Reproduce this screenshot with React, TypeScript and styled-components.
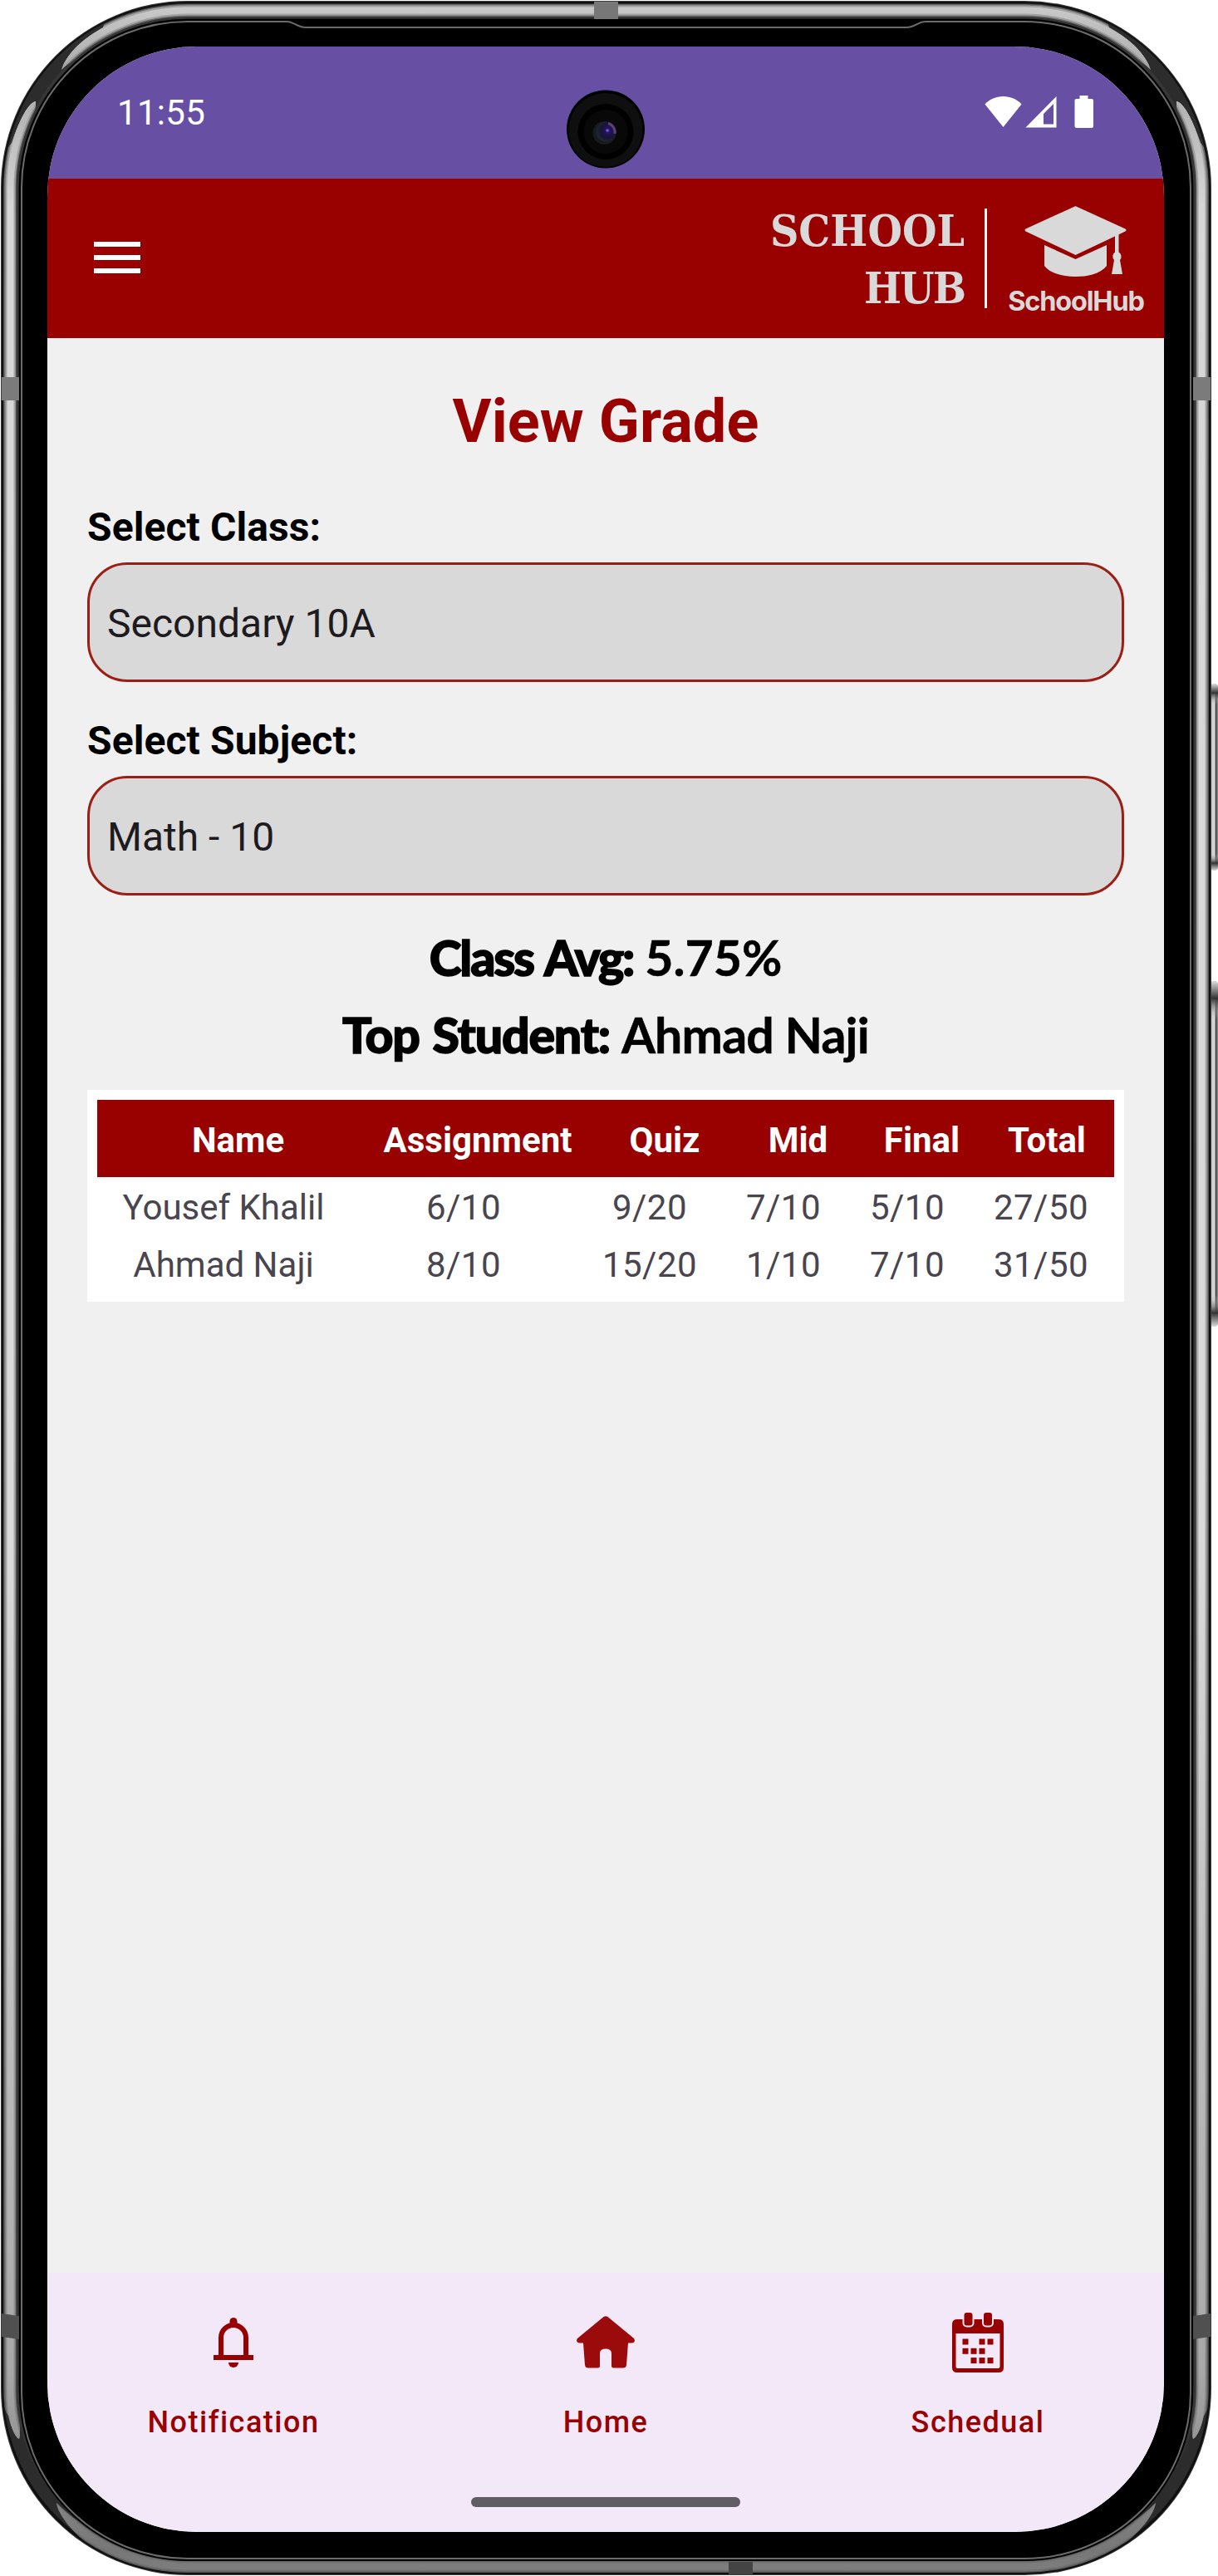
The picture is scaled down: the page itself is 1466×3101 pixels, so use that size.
import React from "react";
import styled, { createGlobalStyle } from "styled-components";

const RED = "#990000";

const GlobalStyle = createGlobalStyle`
  * { box-sizing: border-box; }
  body { margin: 0; background: #fff; }
`;

const Device = styled.div`
  position: relative;
  width: 1466px;
  height: 3101px;
  padding: 56px 65px 53px 57px;
  overflow: hidden;
  font-family: Roboto, "Liberation Sans", sans-serif;
`;

const FrameArt = styled.svg`
  position: absolute;
  inset: 0;
`;

const Screen = styled.main`
  position: relative;
  display: flex;
  flex-direction: column;
  width: 1344px;
  height: 2992px;
  border-radius: 180px;
  overflow: hidden;
  background: #f0f0f0;
`;

const StatusBar = styled.div`
  display: flex;
  justify-content: space-between;
  height: 159px;
  padding: 55px 84px 0 84px;
  background: #6750a4;
  color: #fff;
`;

const Clock = styled.span`
  font-size: 42px;
  line-height: 50px;
  letter-spacing: 0.3px;
`;

const StatusIcons = styled.svg`
  margin-top: 3px;
`;

const Camera = styled.svg`
  position: absolute;
  left: 624px;
  top: 52px;
`;

const AppBar = styled.header`
  display: flex;
  align-items: center;
  height: 192px;
  padding: 0 24px 0 56px;
  background: ${RED};
`;

const MenuButton = styled.button`
  display: flex;
  flex-direction: column;
  gap: 10px;
  width: 56px;
  padding: 0 0 2px;
  border: 0;
  background: none;
`;

const MenuLine = styled.span`
  height: 6px;
  background: #fff;
`;

const BrandName = styled.div`
  display: flex;
  flex-direction: column;
  align-items: flex-end;
  margin-left: auto;
  padding-top: 2px;
  font-family: "DejaVu Serif Condensed", "DejaVu Serif", serif;
  font-stretch: condensed;
  font-weight: 700;
  font-size: 53px;
  line-height: 69px;
  color: #d9d9d9;
`;

const BrandWord = styled.span<{ $tracking: number }>`
  letter-spacing: ${(p) => p.$tracking}px;
`;

const BrandDivider = styled.div`
  width: 3px;
  height: 120px;
  margin: 0 25px 0 24px;
  background: #fff;
`;

const Logo = styled.div`
  display: flex;
  flex-direction: column;
  align-items: center;
  width: 164px;
  padding-top: 7px;
  color: #d9d9d9;
`;

const LogoText = styled.span`
  margin-top: 8px;
  font-family: Inter, "Liberation Sans", sans-serif;
  font-weight: 700;
  font-size: 32.5px;
  letter-spacing: -1.2px;
  line-height: 40px;
  white-space: nowrap;
`;

const Content = styled.section`
  display: flex;
  flex-direction: column;
  flex: 1;
  padding: 59px 48px 0;
`;

const Title = styled.h1`
  margin: 0;
  text-align: center;
  font-weight: 700;
  font-size: 72px;
  line-height: 84px;
  letter-spacing: 0.1px;
  color: ${RED};
`;

const Field = styled.div<{ $gap: number }>`
  display: flex;
  flex-direction: column;
  margin-top: ${(p) => p.$gap}px;
`;

const FieldLabel = styled.label`
  font-weight: 700;
  font-size: 48px;
  line-height: 56px;
  letter-spacing: 0.1px;
  color: #000;
`;

const SelectBox = styled.div`
  display: flex;
  align-items: center;
  height: 144px;
  margin-top: 14px;
  padding: 2px 21px 0;
  border: 3px solid #9c1f15;
  border-radius: 48px;
  background: #d9d9d9;
  font-size: 48px;
  color: #1d1b20;
`;

const Stats = styled.div`
  display: flex;
  flex-direction: column;
  margin-top: 28px;
`;

const StatLine = styled.p`
  display: flex;
  justify-content: center;
  gap: 14px;
  margin: 0;
  font-family: Lato, "Open Sans", sans-serif;
  font-size: 59px;
  line-height: 93px;
  white-space: nowrap;
  color: #000;
`;

const StatKey = styled.strong<{ $tracking: number }>`
  font-weight: 900;
  letter-spacing: ${(p) => p.$tracking}px;
  word-spacing: 3px;
  -webkit-text-stroke: 1.5px #000;
`;

const StatValue = styled.span<{ $tracking: number }>`
  font-weight: 700;
  letter-spacing: ${(p) => p.$tracking}px;
  -webkit-text-stroke: 0.5px #000;
`;

const TableCard = styled.div`
  height: 255px;
  margin-top: 20px;
  padding: 12px;
  background: #fff;
`;

const HeadRow = styled.div`
  display: grid;
  grid-template-columns: 339px 238px 212px 109px 189px 112px;
  align-items: center;
  height: 93px;
  padding-top: 3px;
  background: ${RED};
  color: #fff;
  font-weight: 700;
  font-size: 42px;
  text-align: center;
`;

const BodyRows = styled.div`
  padding-top: 2px;
`;

const BodyRow = styled.div`
  display: grid;
  grid-template-columns: 304px 274px 174px 148px 150px 172px;
  align-items: center;
  height: 69px;
  color: #49454f;
  font-size: 42px;
  text-align: center;
`;

const NameCell = styled.span`
  letter-spacing: 0;
`;

const ScoreCell = styled.span`
  letter-spacing: 0.5px;
`;

const BottomNav = styled.nav`
  position: relative;
  display: grid;
  grid-template-columns: repeat(3, 1fr);
  height: 312px;
  background: #f2e8f8;
`;

const NavItem = styled.a`
  display: flex;
  flex-direction: column;
  align-items: center;
  padding-top: 44px;
  color: ${RED};
`;

const NavLabel = styled.span`
  margin-top: 37px;
  font-weight: 500;
  font-size: 36px;
  line-height: 42px;
  letter-spacing: 1.5px;
`;

const GesturePill = styled.div`
  position: absolute;
  left: 510px;
  bottom: 30px;
  width: 324px;
  height: 12px;
  border-radius: 6px;
  background: #605d64;
`;

/* Metal rails, antenna breaks, side keys and the black glass border. */
function PhoneFrame() {
  return (
    <FrameArt width="1466" height="3101" viewBox="0 0 1466 3101" fill="none">
      <defs>
        <linearGradient id="shineLow" gradientUnits="userSpaceOnUse" x1="0" y1="0" x2="0" y2="3101">
          <stop offset="0" stopColor="#6c6c6c" />
          <stop offset="0.6" stopColor="#7a7a7a" />
          <stop offset="1" stopColor="#585858" />
        </linearGradient>
        <linearGradient id="shineMid" gradientUnits="userSpaceOnUse" x1="0" y1="0" x2="0" y2="3101">
          <stop offset="0" stopColor="#a2a2a2" />
          <stop offset="0.5" stopColor="#b0b0b0" />
          <stop offset="0.9" stopColor="#919191" />
          <stop offset="1" stopColor="#707070" />
        </linearGradient>
        <linearGradient id="shineHigh" gradientUnits="userSpaceOnUse" x1="0" y1="0" x2="0" y2="3101">
          <stop offset="0" stopColor="#cccccc" />
          <stop offset="0.03" stopColor="#a9a9a9" />
          <stop offset="0.08" stopColor="#d6d6d6" />
          <stop offset="0.6" stopColor="#dadada" />
          <stop offset="0.92" stopColor="#a8a8a8" />
          <stop offset="0.99" stopColor="#777777" />
          <stop offset="1" stopColor="#808080" />
        </linearGradient>
        <linearGradient id="key" x1="0" y1="0" x2="1" y2="0">
          <stop offset="0" stopColor="#c2c2c2" />
          <stop offset="0.6" stopColor="#d8d8d8" />
          <stop offset="0.75" stopColor="#444" />
          <stop offset="1" stopColor="#999" />
        </linearGradient>
        <linearGradient id="keyEnds" x1="0" y1="0" x2="0" y2="1">
          <stop offset="0" stopColor="#ddd" />
          <stop offset="0.05" stopColor="#333" />
          <stop offset="0.11" stopColor="#ccc" stopOpacity="0" />
          <stop offset="0.91" stopColor="#ccc" stopOpacity="0" />
          <stop offset="0.96" stopColor="#333" />
          <stop offset="1" stopColor="#ddd" />
        </linearGradient>
        <clipPath id="shine">
          <path d="M74 84C80 66 96 49 124 33L135 0H1324L1335 33C1363 49 1379 66 1385 84C1376 75 1357 64 1333 58L1320 70H139L126 58C102 64 83 75 74 84Z" />
          <path d="M43 122C34 124 24 143 14 172L0 190V2890L10 2908C14 2925 19 2934 23 2936C25 2928 24 2915 22 2890L30 2800V220L32 176C36 160 44 136 43 122Z" />
          <path d="M1416 122C1425 124 1435 143 1445 172L1459 190V2890L1449 2908C1445 2925 1440 2934 1436 2936C1434 2928 1435 2915 1437 2890L1429 2800V220L1427 176C1423 160 1415 136 1416 122Z" />
          <path d="M68 3013C70 3026 84 3046 114 3070L135 3101H1324L1345 3070C1375 3046 1389 3026 1391 3013C1380 3024 1362 3040 1333 3050L1320 3040H139L126 3050C97 3040 79 3024 68 3013Z" />
        </clipPath>
      </defs>
      <rect x="1456" y="823" width="10" height="225" rx="5" fill="url(#key)" />
      <rect x="1456" y="823" width="10" height="225" rx="5" fill="url(#keyEnds)" />
      <rect x="1456" y="1181" width="10" height="416" rx="5" fill="url(#key)" />
      <rect x="1456" y="1181" width="10" height="416" rx="5" fill="url(#keyEnds)" />
      <rect x="1" y="1" width="1457" height="3099" rx="225" fill="#3c3c3c" />
      <rect x="2" y="2" width="1455" height="3097" rx="224" fill="#101010" />
      <rect x="12" y="12" width="1435" height="3075" rx="214" stroke="#2c2c2c" strokeWidth="16" />
      <rect x="20.5" y="20.5" width="1418" height="3058" rx="206" stroke="#363636" strokeWidth="4" />
      <g clipPath="url(#shine)">
        <rect x="12" y="12.5" width="1435" height="3077" rx="214" stroke="url(#shineLow)" strokeWidth="15" />
        <rect x="12.5" y="12.5" width="1434" height="3077" rx="213" stroke="url(#shineMid)" strokeWidth="12" />
        <rect x="12.5" y="12.5" width="1434" height="3077" rx="213" stroke="url(#shineHigh)" strokeWidth="8" />
      </g>
      <rect x="715" y="2" width="29" height="21" fill="#777" />
      <rect x="877" y="3084" width="29" height="15" fill="#444" />
      <rect x="2" y="454" width="21" height="28" fill="#7b7b7b" />
      <rect x="1436" y="454" width="21" height="28" fill="#7b7b7b" />
      <path d="M2 2785L23 2788V2816L2 2813Z" fill="#505050" />
      <path d="M1457 2785L1436 2788V2816L1457 2813Z" fill="#505050" />
      <rect x="23" y="23" width="1413" height="3060" rx="203" fill="#000" />
      <path
        d="M226 26H345C354 26 357 33 368 33H1091C1102 33 1105 26 1114 26H1233A200 200 0 0 1 1433 226V2880A200 200 0 0 1 1233 3080H226A200 200 0 0 1 26 2880V226A200 200 0 0 1 226 26Z"
        stroke="#6b6b6b"
        strokeWidth="2"
      />
    </FrameArt>
  );
}

function CameraLens() {
  return (
    <Camera width="96" height="96" viewBox="681 108 96 96">
      <defs>
        <radialGradient id="lens" cx="0.6" cy="0.45" r="0.6">
          <stop offset="0" stopColor="#4a2cc0" />
          <stop offset="0.15" stopColor="#22165f" />
          <stop offset="0.6" stopColor="#181433" />
          <stop offset="1" stopColor="#1d2836" />
        </radialGradient>
      </defs>
      <circle cx="729" cy="155.500" r="47" fill="#000" />
      <circle cx="729" cy="156.500" r="44.500" fill="#0f0f0f" />
      <circle cx="729" cy="158.500" r="33.500" fill="#000" />
      <circle cx="729" cy="158.500" r="26.500" fill="#080808" />
      <circle cx="727.500" cy="160" r="14" fill="#191a1a" />
      <circle cx="729.500" cy="158.500" r="12" fill="url(#lens)" />
      <path d="M732 148.500A11 11 0 0 1 740 161" stroke="#8a5aa0" strokeWidth="3" fill="none" opacity="0.6" />
      <circle cx="731" cy="157" r="1.800" fill="#7a4cf0" />
    </Camera>
  );
}

function SystemIcons() {
  return (
    <StatusIcons width="132" height="42" viewBox="1186 114 132 42">
      <path d="M1208.500 153L1186.500 125.500C1192 119.500 1200 116 1208.500 116S1225 119.500 1230.500 125.500Z" fill="#fff" />
      <path d="M1235.500 153.500L1272.500 116V153.500ZM1257 137V149.500H1269V125Z" fill="#fff" fillRule="evenodd" />
      <path d="M1300.500 115H1310.500V119H1315Q1317 119 1317 121V152Q1317 154 1315 154H1296.500Q1294.500 154 1294.500 152V121Q1294.500 119 1296.500 119H1300.500Z" fill="#fff" />
    </StatusIcons>
  );
}

function GraduationCap() {
  return (
    <svg width="124" height="88" viewBox="1233 247 124 88" fill="currentColor">
      <path d="M1292.500 249Q1294.500 247.500 1296.500 249L1354.500 275.500Q1356.500 277 1354.500 278.500L1294.500 307L1234.500 278.500Q1232.500 277 1234.500 275.500Z" />
      <path d="M1257 295L1294.500 312L1332 295V320C1324 330 1309 333 1294.500 333S1265 330 1257 320Z" />
      <path d="M1342 283L1346.500 281V303.500A5.500 6 0 0 1 1348 313L1351 330H1338L1341 313A5.500 6 0 0 1 1342 303.500Z" />
    </svg>
  );
}

function BellIcon() {
  return (
    <svg width="74" height="78" viewBox="244 2780 74 78">
      <path d="M266 2836V2814A15 15 0 0 1 296 2814V2836" fill="none" stroke={RED} strokeWidth="6" />
      <path d="M276.500 2799V2794.500A4.500 4.500 0 0 1 285.500 2794.500V2799Z" fill={RED} />
      <rect x="257" y="2835" width="48" height="6" fill={RED} />
      <path d="M275 2844H287A6 6 0 0 1 275 2844Z" fill={RED} />
    </svg>
  );
}

function HomeIcon() {
  return (
    <svg width="74" height="78" viewBox="692 2780 74 78">
      <path
        d="M726.500 2789Q729 2787.500 731.500 2789L763 2815Q764.500 2817 763.500 2819Q762.500 2820.500 760 2820.500H756L754 2847Q753.500 2850.500 750 2850.500H738.500Q736 2850.500 736 2848V2833Q736 2827.500 729 2827.500T722 2833V2848Q722 2850.500 719.500 2850.500H708Q704.500 2850.500 704 2847L702 2820.500H698Q695.500 2820.500 694.500 2819Q693.500 2817 695 2815Z"
        fill="#9b0b0b"
      />
    </svg>
  );
}

const CALENDAR_DAYS: [number, number][] = [
  [0, 0], [2, 0], [3, 0],
  [0, 1], [1, 1], [2, 1],
  [1, 2], [2, 2], [3, 2],
];

function CalendarIcon() {
  return (
    <svg width="74" height="78" viewBox="1140 2780 74 78">
      <path
        d="M1152 2792H1202Q1208 2792 1208 2798V2850Q1208 2856 1202 2856H1152Q1146 2856 1146 2850V2798Q1146 2792 1152 2792ZM1150.500 2809V2849Q1150.500 2851 1152.500 2851H1201.500Q1203.500 2851 1203.500 2849V2809Z"
        fill={RED}
        fillRule="evenodd"
      />
      {[1160.5, 1184].map((x) => (
        <rect key={x} x={x - 1} y="2783" width="12" height="17.500" rx="4" fill={RED} stroke="#f2e8f8" strokeWidth="2" />
      ))}
      {CALENDAR_DAYS.map(([col, row]) => (
        <rect key={`${col}-${row}`} x={1158.5 + col * 10} y={2815.5 + row * 11.3} width="7" height="7" fill={RED} />
      ))}
    </svg>
  );
}

const columns = ["Name", "Assignment", "Quiz", "Mid", "Final", "Total"];
const grades = [
  { name: "Yousef Khalil", scores: ["6/10", "9/20", "7/10", "5/10", "27/50"] },
  { name: "Ahmad Naji", scores: ["8/10", "15/20", "1/10", "7/10", "31/50"] },
];

export default function App() {
  return (
    <>
      <GlobalStyle />
      <Device>
        <PhoneFrame />
        <Screen>
          <StatusBar>
            <Clock>11:55</Clock>
            <SystemIcons />
          </StatusBar>
          <CameraLens />
          <AppBar>
            <MenuButton aria-label="Menu">
              <MenuLine />
              <MenuLine />
              <MenuLine />
            </MenuButton>
            <BrandName>
              <BrandWord $tracking={0}>SCHOOL</BrandWord>
              <BrandWord $tracking={-2}>HUB</BrandWord>
            </BrandName>
            <BrandDivider />
            <Logo>
              <GraduationCap />
              <LogoText>SchoolHub</LogoText>
            </Logo>
          </AppBar>
          <Content>
            <Title>View Grade</Title>
            <Field $gap={57}>
              <FieldLabel>Select Class:</FieldLabel>
              <SelectBox>Secondary 10A</SelectBox>
            </Field>
            <Field $gap={43}>
              <FieldLabel>Select Subject:</FieldLabel>
              <SelectBox>Math - 10</SelectBox>
            </Field>
            <Stats>
              <StatLine>
                <StatKey $tracking={-2.2}>Class Avg:</StatKey>
                <StatValue $tracking={0}>5.75%</StatValue>
              </StatLine>
              <StatLine>
                <StatKey $tracking={-1.2}>Top Student:</StatKey>
                <StatValue $tracking={-0.8}>Ahmad Naji</StatValue>
              </StatLine>
            </Stats>
            <TableCard>
              <HeadRow>
                {columns.map((c) => (
                  <span key={c}>{c}</span>
                ))}
              </HeadRow>
              <BodyRows>
                {grades.map(({ name, scores }) => (
                  <BodyRow key={name}>
                    <NameCell>{name}</NameCell>
                    {scores.map((score, i) => (
                      <ScoreCell key={i}>{score}</ScoreCell>
                    ))}
                  </BodyRow>
                ))}
              </BodyRows>
            </TableCard>
          </Content>
          <BottomNav>
            <NavItem>
              <BellIcon />
              <NavLabel>Notification</NavLabel>
            </NavItem>
            <NavItem>
              <HomeIcon />
              <NavLabel>Home</NavLabel>
            </NavItem>
            <NavItem>
              <CalendarIcon />
              <NavLabel>Schedual</NavLabel>
            </NavItem>
            <GesturePill />
          </BottomNav>
        </Screen>
      </Device>
    </>
  );
}
